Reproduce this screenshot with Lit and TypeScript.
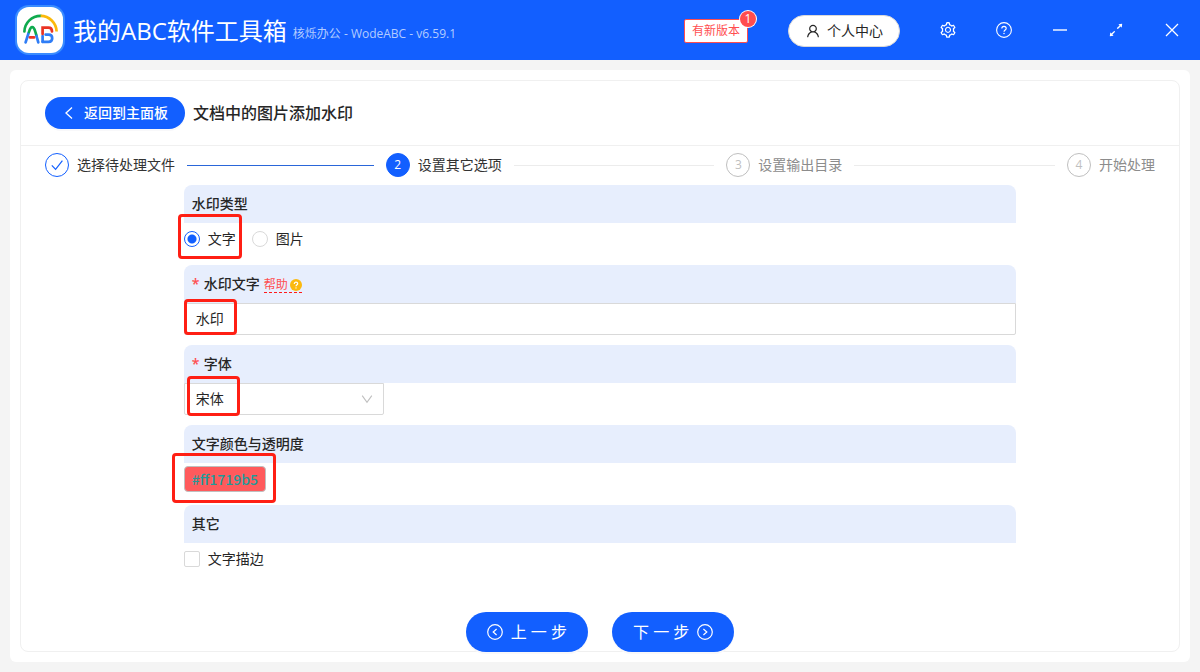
import { LitElement, html, css, svg, nothing } from "lit";
import { customElement, property, state } from "lit/decorators.js";
import { classMap } from "lit/directives/class-map.js";

const glyphs: Record<string, { box: string; body: unknown }> = {
  setting: {
    box: "0 0 1024 1024",
    body: svg`<path fill="currentColor" d="M924.8 625.7l-65.5-56c3.1-19 4.7-38.4 4.7-57.8s-1.6-38.8-4.7-57.8l65.5-56a32.03 32.03 0 009.3-35.2l-.9-2.6a443.74 443.74 0 00-79.7-137.9l-1.8-2.1a32.12 32.12 0 00-35.1-9.5l-81.3 28.9c-30-24.6-63.5-44-99.7-57.6l-15.7-85a32.05 32.05 0 00-25.8-25.7l-2.7-.5c-52.1-9.4-106.9-9.4-159 0l-2.7.5a32.05 32.05 0 00-25.8 25.7l-15.8 85.4a351.86 351.86 0 00-99 57.4l-81.9-29.1a32 32 0 00-35.1 9.5l-1.8 2.1a446.02 446.02 0 00-79.7 137.9l-.9 2.6c-4.5 12.5-.8 26.5 9.3 35.2l66.3 56.6c-3.1 18.8-4.6 38-4.6 57.1 0 19.2 1.5 38.4 4.6 57.1L99 625.5a32.03 32.03 0 00-9.3 35.2l.9 2.6c18.1 50.4 44.9 96.9 79.7 137.9l1.8 2.1a32.12 32.12 0 0035.1 9.5l81.9-29.1c29.8 24.5 63.1 43.9 99 57.4l15.8 85.4a32.05 32.05 0 0025.8 25.7l2.7.5a449.4 449.4 0 00159 0l2.7-.5a32.05 32.05 0 0025.8-25.7l15.7-85a350 350 0 0099.7-57.6l81.3 28.9a32 32 0 0035.1-9.5l1.8-2.1c34.8-41.1 61.6-87.5 79.7-137.9l.9-2.6c4.5-12.3.8-26.3-9.3-35zM788.3 465.9c2.5 15.1 3.8 30.6 3.8 46.1s-1.3 31-3.8 46.1l-6.6 40.1 74.7 63.9a370.03 370.03 0 01-42.6 73.6L721 702.8l-31.4 25.8c-23.9 19.6-50.5 35-79.3 45.8l-38.1 14.3-17.9 97a377.5 377.5 0 01-85 0l-17.9-97.2-37.8-14.5c-28.5-10.8-55-26.2-78.7-45.7l-31.4-25.9-93.4 33.2c-17-22.9-31.2-47.6-42.6-73.6l75.5-64.5-6.5-40c-2.4-14.9-3.7-30.3-3.7-45.5 0-15.3 1.2-30.6 3.7-45.5l6.5-40-75.5-64.5c11.3-26.1 25.6-50.7 42.6-73.6l93.4 33.2 31.4-25.9c23.7-19.5 50.2-34.9 78.7-45.7l37.9-14.3 17.9-97.2c28.1-3.2 56.8-3.2 85 0l17.9 97 38.1 14.3c28.7 10.8 55.4 26.2 79.3 45.8l31.4 25.8 92.8-32.9c17 22.9 31.2 47.6 42.6 73.6L781.8 426l6.5 39.9zM512 326c-97.2 0-176 78.8-176 176s78.8 176 176 176 176-78.8 176-176-78.8-176-176-176zm79.2 255.2A111.6 111.6 0 01512 614c-29.9 0-58-11.7-79.2-32.8A111.6 111.6 0 01400 502c0-29.9 11.7-58 32.8-79.2C454 401.6 482.1 390 512 390c29.9 0 58 11.6 79.2 32.8A111.6 111.6 0 01624 502c0 29.9-11.7 58-32.8 79.2z"/>`,
  },
  user: {
    box: "0 0 1024 1024",
    body: svg`<path fill="currentColor" d="M858.5 763.6a374 374 0 00-80.6-119.5 375.63 375.63 0 00-119.5-80.6c-.4-.2-.8-.3-1.2-.5C719.5 518 760 444.7 760 362c0-137-111-248-248-248S264 225 264 362c0 82.7 40.5 156 102.8 201.1-.4.2-.8.3-1.2.5-44.8 18.9-85 46-119.5 80.6a375.63 375.63 0 00-80.6 119.5A371.7 371.7 0 00136 901.8a8 8 0 008 8.2h60c4.4 0 7.9-3.5 8-7.8 2-77.2 33-149.5 87.8-204.3 56.7-56.7 132-87.9 212.2-87.9s155.5 31.2 212.2 87.9C779 752.7 810 825 812 902.2c.1 4.4 3.6 7.8 8 7.8h60a8 8 0 008-8.2c-1-47.8-10.9-94.3-29.5-138.2zM512 534c-45.9 0-89.1-17.9-121.6-50.4S340 407.9 340 362c0-45.9 17.9-89.1 50.4-121.6S466.1 190 512 190s89.1 17.9 121.6 50.4S684 316.1 684 362c0 45.9-17.9 89.1-50.4 121.6S557.9 534 512 534z"/>`,
  },
  help: {
    box: "0 0 16 16",
    body: svg`<g fill="none" stroke="currentColor" stroke-width="1.1"><circle cx="8" cy="8" r="7.4"/><path d="M5.8 6.6C5.8 5.2 6.7 4.4 8 4.4S10.2 5.2 10.2 6.5C10.2 8 8 8 8 9.8"/></g><circle cx="8" cy="11.6" r=".75" fill="currentColor"/>`,
  },
  minimize: {
    box: "0 0 16 16",
    body: svg`<path d="M1 8H15" stroke="currentColor" stroke-width="1.4"/>`,
  },
  expand: {
    box: "0 0 1024 1024",
    body: svg`<path fill="currentColor" d="M855 160.1l-189.2 23.5c-6.6.8-9.3 8.8-4.7 13.5l54.7 54.7-153.5 153.5a8.03 8.03 0 000 11.3l45.1 45.1c3.1 3.1 8.2 3.1 11.3 0l153.6-153.6 54.7 54.7a7.94 7.94 0 0013.5-4.7L863.9 169a7.9 7.9 0 00-8.9-8.9zM416.6 562.3a8.03 8.03 0 00-11.3 0L251.8 715.9l-54.7-54.7a7.94 7.94 0 00-13.5 4.7L160.1 855c-.6 5.2 3.7 9.5 8.9 8.9l189.2-23.5c6.6-.8 9.3-8.8 4.7-13.5l-54.7-54.7 153.6-153.6c3.1-3.1 3.1-8.2 0-11.3l-45.2-45z"/>`,
  },
  close: {
    box: "0 0 16 16",
    body: svg`<path d="M2 2L14 14M14 2L2 14" stroke="currentColor" stroke-width="1.3"/>`,
  },
  left: {
    box: "0 0 14 14",
    body: svg`<path d="M10 1.6L4 7L10 12.4" fill="none" stroke="currentColor" stroke-width="1.3"/>`,
  },
  check: {
    box: "0 0 14 14",
    body: svg`<path d="M1.8 7.4L5.6 11.4L12.4 2.6" fill="none" stroke="currentColor" stroke-width="1.2"/>`,
  },
  down: {
    box: "0 0 14 14",
    body: svg`<path d="M2.2 3.6L7 10.2L11.8 3.6" fill="none" stroke="currentColor" stroke-width="1.1"/>`,
  },
  leftCircle: {
    box: "0 0 16 16",
    body: svg`<g fill="none" stroke="currentColor" stroke-width="1.2"><circle cx="8" cy="8" r="7.3"/><path d="M9.6 5L6.2 8L9.6 11"/></g>`,
  },
  rightCircle: {
    box: "0 0 16 16",
    body: svg`<g fill="none" stroke="currentColor" stroke-width="1.2"><circle cx="8" cy="8" r="7.3"/><path d="M6.4 5L9.8 8L6.4 11"/></g>`,
  },
  question: {
    box: "0 0 12 12",
    body: svg`<circle cx="6" cy="6" r="6" fill="#fbb90f"/><path d="M4.3 4.9C4.3 3.8 5 3.2 6 3.2S7.7 3.8 7.7 4.7C7.7 5.8 6 5.9 6 7.3" fill="none" stroke="#fff" stroke-width="1.2"/><circle cx="6" cy="8.9" r=".7" fill="#fff"/>`,
  },
  logo: {
    box: "0 0 50 50",
    body: svg`<rect width="50" height="50" rx="14" fill="#3a8cff"/>
      <rect x="2" y="2" width="46" height="46" rx="12" fill="#fff"/>
      <g fill="none" stroke-width="2.7" stroke-linecap="round">
        <path d="M9.4 26.5A16.2 16.2 0 0 1 25.6 10.8" stroke="#0faa4e"/>
        <path d="M41.6 26.5A16.2 16.2 0 0 0 25.6 10.8" stroke="#fbb90b" stroke-linecap="butt"/>
        <path d="M10.6 37.4L13.6 28" stroke="#2f7df6"/>
        <path d="M14 27C15 23.4 15.8 22.2 17.2 22.2S19.4 23.4 20.4 27L21.4 30.4" stroke="#0faa4e"/>
        <path d="M21.5 31L23.3 37.4" stroke="#2f7df6"/>
        <path d="M15 32.4H19" stroke="#ea3323"/>
        <path d="M27.6 36.8V31" stroke="#2f7df6"/>
        <path d="M27.6 29V22.6H33.4C36 22.6 37 24 37 26.4" stroke="#ea3323"/>
        <path d="M30.6 29.6H33.6C36 29.6 37.2 31 37.2 33.2C37.2 35.6 35.8 36.8 33.4 36.8H27.6" stroke="#2f7df6"/>
      </g>`,
  },
};

@customElement("ui-icon")
class UiIcon extends LitElement {
  static styles = css`
    :host { display: inline-flex; width: 16px; height: 16px; flex: none; }
    svg { width: 100%; height: 100%; display: block; }
  `;
  @property() name = "";
  render() {
    const g = glyphs[this.name];
    return g ? html`<svg viewBox=${g.box} aria-hidden="true">${g.body}</svg>` : nothing;
  }
}

@customElement("step-bar")
class StepBar extends LitElement {
  static styles = css`
    .steps { display: flex; gap: 12px; margin: 0; padding: 0; list-style: none; }
    .step { display: flex; align-items: center; flex: 1; color: #8c8c8c; }
    .step:last-child { flex: none; }
    .dot {
      box-sizing: border-box; width: 24px; height: 24px; border-radius: 50%;
      border: 1px solid #bfbfbf; color: #bfbfbf; margin-right: 8px; flex: none;
      display: flex; align-items: center; justify-content: center;
      font-size: 12px; line-height: 22px;
    }
    .title { font-size: 14px; line-height: 24px; white-space: nowrap; }
    .line { flex: 1; height: 1px; background: #ececec; margin-left: 12px; }
    .done, .current { color: #333; }
    .done .dot { border-color: #125fff; color: #125fff; }
    .done .line { background: #2a66d9; }
    .current .dot { border-color: #125fff; background: #125fff; color: #fff; }
    .tick { width: 14px; height: 14px; }
  `;
  @property({ type: Array }) labels: string[] = [];
  @property({ type: Number }) current = 0;
  render() {
    return html`<ol class="steps">
      ${this.labels.map((label, i) => html`
        <li class=${classMap({ step: true, done: i < this.current, current: i === this.current })}>
          <span class="dot">${i < this.current ? html`<ui-icon class="tick" name="check"></ui-icon>` : i + 1}</span>
          <span class="title">${label}</span>
          ${i < this.labels.length - 1 ? html`<span class="line"></span>` : nothing}
        </li>`)}
    </ol>`;
  }
}

@customElement("app-root")
class AppRoot extends LitElement {
  static styles = css`
    :host {
      display: flex; flex-direction: column; min-height: 100vh;
      background: #f4f4f4; color: #262626;
      font: 14px/22px "Open Sans", "Noto Sans CJK SC", sans-serif;
    }
    * { box-sizing: border-box; }
    button, input, select { font: inherit; color: inherit; margin: 0; }
    button { cursor: pointer; }
    .bar { display: flex; align-items: center; height: 60px; padding: 2px 0 0 15px; background: #125fff; color: #fff; }
    .logo { width: 50px; height: 50px; margin-bottom: 2px; }
    .brand { margin: 0 0 0 8px; font-size: 24px; line-height: 36px; font-weight: 400; white-space: nowrap; }
    .version { margin-left: 6px; padding-top: 6px; font-size: 12px; line-height: 20px; color: #b3ccff; white-space: nowrap; }
    .update {
      position: relative; margin-left: auto; padding: 0 7px; height: 24px;
      border: 1px solid #ff4d4f; border-radius: 2px; background: #fff; color: #ff4d4f;
      font-size: 12px; line-height: 22px; text-decoration: none;
    }
    .count {
      position: absolute; top: -9px; right: -9px; width: 16px; height: 16px; border-radius: 50%;
      background: #ff4d4f; color: #fff; box-shadow: 0 0 0 1px #fff; text-align: center; line-height: 16px;
    }
    .account {
      display: flex; align-items: center; gap: 6px; height: 32px; padding: 0 16px; margin: 0 20px 0 40px;
      border: 1px solid #d9d9d9; border-radius: 16px; background: #fff; color: #262626;
    }
    .tool { display: flex; align-items: center; justify-content: center; width: 56px; height: 60px; padding: 0 0 2px; border: 0; background: none; color: #fff; }
    .tool .large { width: 18px; height: 18px; }
    .page { flex: 1; display: flex; margin: 10px; padding: 10px; border-radius: 6px; background: #fff; }
    .card { flex: 1; display: flex; flex-direction: column; border: 1px solid #f0f0f0; border-radius: 8px; min-width: 0; }
    .head { display: flex; align-items: center; gap: 8px; padding: 16px 24px; border-bottom: 1px solid #f0f0f0; }
    .back {
      display: flex; align-items: center; gap: 8px; height: 32px; padding: 0 17px; border: 0; border-radius: 16px;
      background: #125fff; color: #fff; font-weight: 500; box-shadow: 0 2px 0 #f8f8fa;
    }
    .back ui-icon { width: 14px; height: 14px; }
    .name { margin: 0; font-size: 16px; line-height: 24px; font-weight: 500; }
    .steps { display: block; padding: 7px 24px 8px; }
    .form { width: calc((100% - 48px) * 3 / 4); margin: 0 auto; display: flex; flex-direction: column; gap: 10px; }
    .field { border: 0; margin: 0; padding: 0; min-width: 0; }
    .label {
      display: flex; align-items: center; width: 100%; height: 38px; padding: 0 8px;
      border-radius: 8px 8px 0 0; background: #e7eefd; font-weight: 500;
    }
    .need { width: 12px; color: #ff4d4f; font-weight: 600; }
    .help {
      display: flex; align-items: center; gap: 2px; margin-left: 4px; padding-top: 2px; border-bottom: 1px dashed #ff1a1a;
      color: #ff4d4f; font-size: 12px; line-height: 15px; font-weight: 400; text-decoration: none;
    }
    .help ui-icon { width: 12px; height: 12px; }
    .body { position: relative; display: flex; align-items: center; gap: 16px; height: 32px; }
    .choice { display: flex; align-items: center; gap: 8px; }
    .radio, .check { appearance: none; width: 16px; height: 16px; border: 1px solid #d9d9d9; background: #fff; }
    .radio { border-radius: 50%; }
    .radio:checked { border-color: #125fff; background: radial-gradient(circle, #125fff 4px, #fff 5px); }
    .check { border-radius: 2px; }
    .check:checked { background: #125fff; border-color: #125fff; }
    .text { width: 100%; height: 32px; padding: 0 11px 2px; border: 1px solid #d9d9d9; border-radius: 0 0 2px 2px; background: #fff; }
    .picker { display: grid; align-items: center; width: 200px; }
    .picker select, .picker ui-icon { grid-area: 1 / 1; }
    .picker select { appearance: none; height: 32px; padding: 0 11px; border: 1px solid #d9d9d9; border-radius: 0 0 2px 2px; background: #fff; }
    .picker ui-icon { justify-self: end; margin-right: 10px; width: 14px; height: 14px; color: #bfbfbf; pointer-events: none; }
    .color {
      height: 26px; padding: 0 7px; border: 1px solid #bfbfbf; border-radius: 4px; background: #ff1719b5;
      color: #1f9a9a; font-family: "Noto Sans CJK SC", sans-serif; font-weight: 500; line-height: 22px;
    }
    .mark { position: absolute; border: 3px solid #ff1f14; border-radius: 4px; pointer-events: none; }
    .mark-type { left: -6px; top: -9px; width: 64px; height: 45px; }
    .mark-text { left: 0; top: -4px; width: 53px; height: 36px; }
    .mark-font { left: 3px; top: -7px; width: 53px; height: 40px; }
    .mark-color { left: -12px; top: -10px; width: 104px; height: 50px; }
    .foot { display: flex; justify-content: center; gap: 24px; margin: auto 0 -1px; padding-top: 16px; }
    .go {
      display: flex; align-items: center; gap: 8px; height: 40px; padding: 0 21px; border: 0; border-radius: 20px;
      background: #125fff; color: #fff; font-size: 16px; line-height: 24px; box-shadow: 0 2px 0 #f8f8fa;
    }
  `;

  @state() private kind = "text";

  private tools = [
    { icon: "setting", label: "设置" },
    { icon: "help", label: "帮助" },
    { icon: "minimize", label: "最小化" },
    { icon: "expand", label: "最大化" },
    { icon: "close", label: "关闭" },
  ];

  private radio(value: string, label: string) {
    return html`<label class="choice">
      <input class="radio" type="radio" name="kind" .checked=${this.kind === value} @change=${() => (this.kind = value)} />
      ${label}
    </label>`;
  }

  render() {
    return html`
      <header class="bar">
        <ui-icon class="logo" name="logo"></ui-icon>
        <h1 class="brand">我的ABC软件工具箱</h1>
        <span class="version">核烁办公 - WodeABC - v6.59.1</span>
        <a class="update" href="#">有新版本<span class="count">1</span></a>
        <button class="account"><ui-icon name="user"></ui-icon>个人中心</button>
        ${this.tools.map((t) => html`<button class="tool" aria-label=${t.label}>
          <ui-icon class=${classMap({ large: t.icon === "setting" || t.icon === "expand" })} name=${t.icon}></ui-icon>
        </button>`)}
      </header>
      <main class="page">
        <section class="card">
          <div class="head">
            <button class="back"><ui-icon name="left"></ui-icon>返回到主面板</button>
            <h2 class="name">文档中的图片添加水印</h2>
          </div>
          <step-bar class="steps" .labels=${["选择待处理文件", "设置其它选项", "设置输出目录", "开始处理"]} .current=${1}></step-bar>
          <form class="form" @submit=${(e: Event) => e.preventDefault()}>
            <fieldset class="field">
              <legend class="label">水印类型</legend>
              <div class="body">
                ${this.radio("text", "文字")}${this.radio("image", "图片")}
                <span class="mark mark-type"></span>
              </div>
            </fieldset>
            <div class="field">
              <div class="label"><span class="need">*</span><label for="words">水印文字</label>
                <a class="help" href="#">帮助<ui-icon name="question"></ui-icon></a></div>
              <div class="body"><input id="words" class="text" type="text" value="水印" /><span class="mark mark-text"></span></div>
            </div>
            <div class="field">
              <div class="label"><span class="need">*</span><label for="face">字体</label></div>
              <div class="body">
                <span class="picker"><select id="face"><option>宋体</option></select><ui-icon name="down"></ui-icon></span>
                <span class="mark mark-font"></span>
              </div>
            </div>
            <div class="field">
              <label class="label" for="color">文字颜色与透明度</label>
              <div class="body"><button id="color" class="color" type="button">#ff1719b5</button><span class="mark mark-color"></span></div>
            </div>
            <fieldset class="field">
              <legend class="label">其它</legend>
              <div class="body"><label class="choice"><input class="check" type="checkbox" />文字描边</label></div>
            </fieldset>
          </form>
          <div class="foot">
            <button class="go"><ui-icon name="leftCircle"></ui-icon>上 一 步</button>
            <button class="go">下 一 步<ui-icon name="rightCircle"></ui-icon></button>
          </div>
        </section>
      </main>
    `;
  }
}
